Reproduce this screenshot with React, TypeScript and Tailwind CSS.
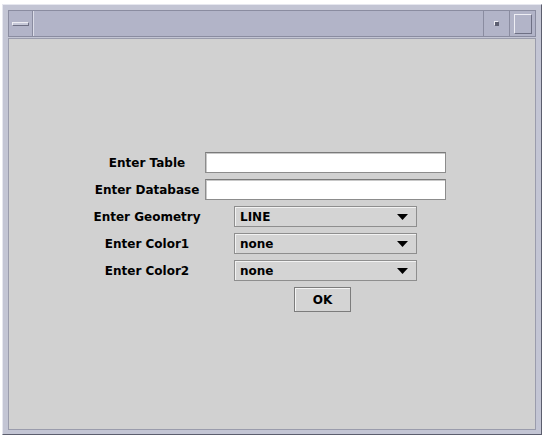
import React from "react";

const font = { fontFamily: '"DejaVu Sans", "Liberation Sans", sans-serif' };

function TextField() {
  return (
    <div className="h-[21px] w-[241px] border border-[#8c8c8c] border-t-[#7a7a7a] bg-white shadow-[inset_1px_1px_0_#c8c8c8]" />
  );
}

function Combo({ value }: { value: string }) {
  return (
    <div className="flex h-[21px] w-[183px] items-center justify-between border border-[#8e8e8e] bg-[#d4d4d4] pl-[5px] pr-[8px] shadow-[inset_1px_1px_0_#f2f2f2]">
      <span className="text-[12px] font-bold leading-none text-black">{value}</span>
      <svg width="11" height="6" viewBox="0 0 11 6">
        <polygon points="0,0 11,0 5.5,6" fill="#000" />
      </svg>
    </div>
  );
}

function Label({ children }: { children: React.ReactNode }) {
  return <span className="text-[12px] font-bold leading-none text-black">{children}</span>;
}

export default function App() {
  return (
    <div className="h-[442px] w-[550px] bg-white" style={font}>
      <div className="ml-[2px] mt-[4px] flex h-[431px] w-[540px] flex-col border border-t-[#e6e7ef] border-l-[#e6e7ef] border-r-[#5c5e6e] border-b-[#5c5e6e] bg-[#c3c5d4] px-[5px] pb-[4px] pt-[5px]">
        {/* title bar */}
        <div className="flex h-[27px] border border-[#8a8ca0] bg-[#b2b4c8]">
          <div className="flex w-[24px] items-center justify-center border-r border-r-[#8a8ca0]">
            <div className="h-[4px] w-[17px] border border-t-[#eeeef4] border-l-[#eeeef4] border-r-[#6e7084] border-b-[#6e7084] bg-[#c6c8d8]" />
          </div>
          <div className="flex-1 border-l border-l-[#dcdde8]" />
          <div className="flex w-[26px] items-center justify-center border-l border-l-[#8a8ca0]">
            <div className="h-[4px] w-[4px] bg-[#5c5e70] shadow-[-1px_-1px_0_#eeeef4]" />
          </div>
          <div className="flex w-[26px] items-center justify-center border-l border-l-[#8a8ca0]">
            <div className="h-[20px] w-[18px] border border-t-[#eeeef4] border-l-[#eeeef4] border-r-[#6e7084] border-b-[#6e7084] bg-[#b2b4c8]" />
          </div>
        </div>
        {/* content */}
        <div className="mt-[1px] flex-1 border border-[#9a9cac] bg-[#d1d1d1] pl-[80px] pt-[113px]">
          <div className="grid grid-cols-[116px_241px] gap-y-[6px] justify-items-center items-center">
            <Label>Enter Table</Label>
            <TextField />
            <Label>Enter Database</Label>
            <TextField />
            <Label>Enter Geometry</Label>
            <Combo value="LINE" />
            <Label>Enter Color1</Label>
            <Combo value="none" />
            <Label>Enter Color2</Label>
            <Combo value="none" />
            <div />
            <button className="mr-[6px] flex h-[25px] w-[57px] items-center justify-center border border-[#7c7c7c] bg-[#d4d4d4] text-[12px] font-bold text-black shadow-[inset_1px_1px_0_#f4f4f4]">
              OK
            </button>
          </div>
        </div>
      </div>
    </div>
  );
}
